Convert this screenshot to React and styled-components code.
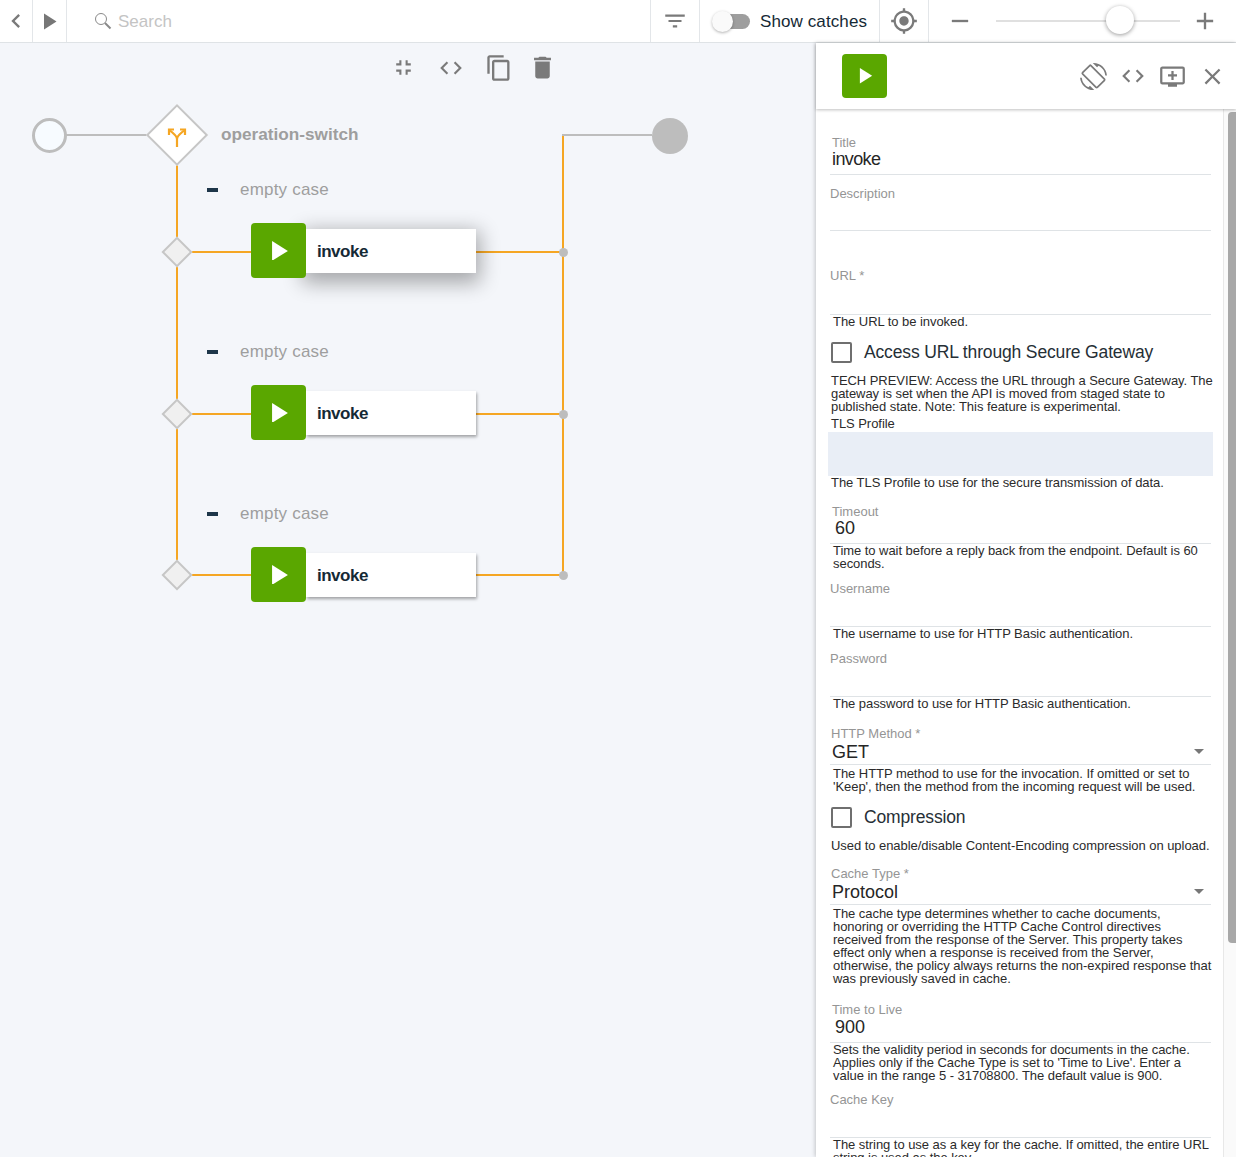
import React from 'react';
import styled, { createGlobalStyle } from 'styled-components';
import {
  MdChevronLeft, MdFilterList, MdMyLocation, MdFullscreenExit, MdCode, MdContentCopy,
  MdDelete, MdScreenRotation, MdAddToQueue, MdClose, MdAdd, MdRemove,
} from 'react-icons/md';

const orange = '#f5a623';
const grey = '#bdbdbd';
const iconColor = '#7a7a7a';
const green = '#5aa700';
const font = '"Liberation Sans", Arial, sans-serif';

const GlobalStyle = createGlobalStyle`
  html, body { margin: 0; padding: 0; height: 100%; overflow: hidden; }
  body { font-family: ${font}; background: #fff; }
  * { box-sizing: border-box; }
`;

const Page = styled.div`
  width: 1236px;
  height: 1157px;
  display: flex;
  flex-direction: column;
  overflow: hidden;
`;

const Toolbar = styled.header`
  height: 43px;
  flex: none;
  display: flex;
  align-items: stretch;
  background: #fff;
  border-bottom: 1px solid #dfe3e6;
`;

const ToolCell = styled.div`
  width: ${p => p.$w}px;
  flex: ${p => (p.$grow ? '1' : 'none')};
  display: flex;
  align-items: center;
  justify-content: ${p => (p.$start ? 'flex-start' : 'center')};
  padding-left: ${p => p.$pl || 0}px;
  border-right: ${p => (p.$noline ? 'none' : '1px solid #e3e6e9')};
  color: ${iconColor};
`;

const SearchText = styled.span`
  margin-left: 6px;
  padding-top: 1px;
  font-size: 17px;
  color: #c4c4c4;
`;

const Toggle = styled.div`
  position: relative;
  width: 33px;
  height: 15px;
  margin-left: 17px;
  border-radius: 8px;
  background: #9e9e9e;
`;

const ToggleKnob = styled.div`
  position: absolute;
  left: -5px;
  top: -3px;
  width: 21px;
  height: 21px;
  border-radius: 50%;
  background: #fafafa;
  box-shadow: 0 1px 3px rgba(0, 0, 0, 0.3);
`;

const ToggleLabel = styled.span`
  margin-left: 10px;
  padding-top: 1px;
  font-size: 17px;
  letter-spacing: 0.1px;
  color: #152935;
  white-space: nowrap;
`;

const SliderTrack = styled.div`
  position: relative;
  width: 184px;
  height: 2px;
  margin: 0 11px 0 22px;
  background: #e0e0e0;
`;

const SliderThumb = styled.div`
  position: absolute;
  left: 110px;
  top: -14px;
  width: 28px;
  height: 28px;
  border-radius: 50%;
  background: #fff;
  box-shadow: 0 1px 4px rgba(0, 0, 0, 0.4);
`;

const Body = styled.div`
  flex: 1;
  display: flex;
  min-height: 0;
`;

const Canvas = styled.main`
  position: relative;
  width: 816px;
  flex: none;
  background: #f4f6fa;
  overflow: hidden;
`;

const CanvasActions = styled.div`
  position: absolute;
  left: 390px;
  top: 10px;
  display: flex;
  align-items: center;
  gap: 20px;
  color: ${iconColor};
`;

const ActionSlot = styled.span`
  width: ${p => p.$w || 26}px;
  display: flex;
  justify-content: center;

  svg {
    flex: none;
  }
`;

/* the diagram is a free canvas: its nodes and wires sit at their own coordinates */
const Wire = styled.div`
  position: absolute;
  left: ${p => p.$x}px;
  top: ${p => p.$y}px;
  width: ${p => p.$w || 2}px;
  height: ${p => p.$h || 2}px;
  background: ${p => p.$color || orange};
`;

const Circle = styled.div`
  position: absolute;
  left: ${p => p.$x}px;
  top: ${p => p.$y}px;
  width: ${p => p.$size}px;
  height: ${p => p.$size}px;
  border-radius: 50%;
  background: ${p => p.$fill};
  border: ${p => (p.$ring ? `3px solid ${grey}` : 'none')};
`;

const Diamond = styled.div`
  position: absolute;
  left: ${p => p.$x}px;
  top: ${p => p.$y}px;
  width: ${p => p.$size}px;
  height: ${p => p.$size}px;
  transform: rotate(45deg);
  background: ${p => p.$fill};
  border: 2px solid #c6c6c6;
`;

const SplitIcon = styled.svg`
  position: absolute;
  left: 165px;
  top: 83px;
`;

const SwitchLabel = styled.div`
  position: absolute;
  left: 221px;
  top: 81px;
  font-size: 17.2px;
  font-weight: 700;
  line-height: 20px;
  color: #9e9e9e;
`;

const CaseDash = styled.div`
  position: absolute;
  left: 207px;
  top: ${p => p.$y + 3}px;
  width: 11px;
  height: 4px;
  background: #1d3649;
`;

const CaseLabel = styled.div`
  position: absolute;
  left: 240px;
  top: ${p => p.$y - 5}px;
  font-size: 17px;
  letter-spacing: 0.2px;
  line-height: 20px;
  color: #9e9e9e;
`;

const Node = styled.div`
  position: absolute;
  left: 251px;
  top: ${p => p.$y}px;
  width: 225px;
  height: 55px;
  display: flex;
  align-items: center;
`;

const NodeBody = styled.div`
  position: absolute;
  left: 55px;
  top: 6px;
  width: 170px;
  height: 44px;
  display: flex;
  align-items: center;
  padding: 1px 0 0 11px;
  background: #fff;
  font-size: 17px;
  font-weight: 700;
  letter-spacing: -0.5px;
  color: #152935;
  box-shadow: ${p => (p.$raised
    ? '0 6px 20px 4px rgba(0, 0, 0, 0.32)'
    : '1px 2px 3px rgba(0, 0, 0, 0.35)')};
`;

const GreenTile = styled.div`
  position: relative;
  z-index: 1;
  width: ${p => p.$w}px;
  height: ${p => p.$h}px;
  flex: none;
  display: flex;
  align-items: center;
  justify-content: center;
  padding-left: 2px;
  border-radius: 4px;
  background: ${green};
`;

const Panel = styled.aside`
  position: relative;
  flex: 1;
  display: flex;
  flex-direction: column;
  min-width: 0;
  background: #fff;
  box-shadow: -1px 0 4px rgba(0, 0, 0, 0.2);
`;

const PanelHead = styled.div`
  position: relative;
  z-index: 1;
  height: 66px;
  flex: none;
  display: flex;
  align-items: center;
  padding: 0 10px 0 26px;
  color: ${iconColor};
  box-shadow: 0 1px 3px rgba(0, 0, 0, 0.25);
`;

const HeadIcons = styled.div`
  margin-left: auto;
  display: flex;
  align-items: center;
  gap: 13px;
`;

const PanelScroll = styled.div`
  flex: 1;
  display: flex;
  min-height: 0;
  overflow: hidden;
`;

const Form = styled.div`
  width: 408px;
  flex: none;
  height: 1100px;
  padding-left: 14px;
  border-right: 1px solid #e8e8e8;
`;

const Scrollbar = styled.div`
  flex: 1;
  padding: 3px 0 0 4px;
  background: #fafafa;
`;

const ScrollThumb = styled.div`
  height: 831px;
  background: #a8a8a8;
  border-radius: 4px 0 0 4px;
`;

const Field = styled.div`
  position: relative;
  width: 381px;
  height: ${p => p.$h}px;
  border-bottom: 1px solid #dfe3e6;
`;

const Label = styled.div`
  padding: ${p => p.$top}px 0 0 ${p => p.$in || 0}px;
  font-size: 13px;
  line-height: 15px;
  color: #959595;
`;

const Value = styled.div`
  margin-top: ${p => p.$mt || 0}px;
  padding-left: ${p => p.$in}px;
  font-size: 18px;
  letter-spacing: ${p => p.$ls || 0}px;
  line-height: 20px;
  color: #262626;
`;

const Caret = styled.span`
  position: absolute;
  right: 7px;
  bottom: 10px;
  border-left: 5px solid transparent;
  border-right: 5px solid transparent;
  border-top: 5px solid #777;
`;

const Hint = styled.div`
  padding: ${p => p.$top || 0}px 0 ${p => p.$bottom || 0}px ${p => p.$in ?? 3}px;
  font-size: 13px;
  letter-spacing: -0.05px;
  line-height: 13px;
  white-space: nowrap;
  color: #2b2b2b;
`;

const CheckRow = styled.label`
  display: flex;
  align-items: center;
  gap: 12px;
  height: 21px;
  margin: ${p => p.$top}px 0 ${p => p.$bottom}px 1px;
  font-size: 17.5px;
  letter-spacing: -0.15px;
  color: #262f36;
`;

const CheckBox = styled.span`
  width: 21px;
  height: 21px;
  border: 2px solid #6f6f6f;
  border-radius: 2px;
`;

const TlsBox = styled.div`
  width: 385px;
  height: 44px;
  margin: 2px 0 0 -2px;
  background: #e9eef6;
`;

const Play = ({ size = 18 }) => (
  <svg width={size} height={size * 1.1} viewBox="0 0 18 20">
    <path d="M1 0 L17 10 L1 20 Z" fill="#fff" />
  </svg>
);

const SearchIcon = () => (
  <svg width="18" height="18" viewBox="0 0 18 18" fill="none" stroke="#8a8a8a">
    <circle cx="7" cy="7" r="5.5" strokeWidth="1" />
    <path d="M11 11 L16.5 16.5" strokeWidth="2" />
  </svg>
);

const Split = () => (
  <SplitIcon width="24" height="24" viewBox="0 0 24 24" fill="none" stroke={orange} strokeWidth="2.2">
    <path d="M12 21 V13 C12 10 9 8 5 4.5" />
    <path d="M12 13 C12 10 15 8 19 4.5" />
    <path d="M4 9 V3.5 H9" />
    <path d="M15 3.5 H20 V9" />
  </SplitIcon>
);

const branches = [
  { caseY: 142, nodeY: 180, mid: 209, raised: true },
  { caseY: 304, nodeY: 342, mid: 371 },
  { caseY: 466, nodeY: 504, mid: 532 },
];

const FlowDiagram = () => (
  <>
    <CanvasActions>
      <ActionSlot><MdFullscreenExit size={25} /></ActionSlot>
      <ActionSlot $w={30}><MdCode size={26} /></ActionSlot>
      <ActionSlot><MdContentCopy size={28} /></ActionSlot>
      <ActionSlot $w={20}><MdDelete size={29} /></ActionSlot>
    </CanvasActions>

    <Wire $x={66} $y={91} $w={82} $color={grey} />
    <Wire $x={176} $y={122} $h={410} />
    <Wire $x={562} $y={91} $h={441} />
    <Wire $x={562} $y={91} $w={90} $color={grey} />

    <Circle $x={32} $y={75} $size={35} $ring $fill="#f7fbff" />
    <Circle $x={652} $y={75} $size={36} $fill={grey} />

    <Diamond $x={155} $y={70} $size={44} $fill="#fff" />
    <Split />
    <SwitchLabel>operation-switch</SwitchLabel>

    {branches.map(b => (
      <React.Fragment key={b.nodeY}>
        <CaseDash $y={b.caseY} />
        <CaseLabel $y={b.caseY}>empty case</CaseLabel>
        <Wire $x={190} $y={b.mid - 1} $w={373} />
        <Diamond $x={166} $y={b.mid - 11} $size={22} $fill="#f0f0f0" />
        <Circle $x={559} $y={b.mid - 4} $size={9} $fill={grey} />
        <Node $y={b.nodeY}>
          <GreenTile $w={55} $h={55}><Play /></GreenTile>
          <NodeBody $raised={b.raised}>invoke</NodeBody>
        </Node>
      </React.Fragment>
    ))}
  </>
);

const PropertyForm = () => (
  <Form>
    <Field $h={66}>
      <Label $top={26} $in={2}>Title</Label>
      <Value $in={2} $mt={-1} $ls={-0.6}>invoke</Value>
    </Field>
    <Field $h={56}>
      <Label $top={11}>Description</Label>
    </Field>
    <Field $h={84}>
      <Label $top={37}>URL *</Label>
    </Field>
    <Hint>The URL to be invoked.</Hint>
    <CheckRow $top={14} $bottom={11}><CheckBox />Access URL through Secure Gateway</CheckRow>
    <Hint $in={1}>
      TECH PREVIEW: Access the URL through a Secure Gateway. The<br />
      gateway is set when the API is moved from staged state to<br />
      published state. Note: This feature is experimental.
    </Hint>
    <Hint $in={1} $top={4}>TLS Profile</Hint>
    <TlsBox />
    <Hint $in={1}>The TLS Profile to use for the secure transmission of data.</Hint>
    <Field $h={55}>
      <Label $top={15} $in={2}>Timeout</Label>
      <Value $in={5} $mt={-1}>60</Value>
    </Field>
    <Hint>
      Time to wait before a reply back from the endpoint. Default is 60<br />
      seconds.
    </Hint>
    <Field $h={57}>
      <Label $top={11}>Username</Label>
    </Field>
    <Hint>The username to use for HTTP Basic authentication.</Hint>
    <Field $h={57}>
      <Label $top={11}>Password</Label>
    </Field>
    <Hint>The password to use for HTTP Basic authentication.</Hint>
    <Field $h={55}>
      <Label $top={16} $in={1}>HTTP Method *</Label>
      <Value $in={2} $mt={1}>GET</Value>
      <Caret />
    </Field>
    <Hint $top={2}>
      The HTTP method to use for the invocation. If omitted or set to<br />
      'Keep', then the method from the incoming request will be used.
    </Hint>
    <CheckRow $top={14} $bottom={11}><CheckBox />Compression</CheckRow>
    <Hint $in={1}>Used to enable/disable Content-Encoding compression on upload.</Hint>
    <Field $h={53}>
      <Label $top={14} $in={1}>Cache Type *</Label>
      <Value $in={2} $mt={1}>Protocol</Value>
      <Caret />
    </Field>
    <Hint $top={2}>
      The cache type determines whether to cache documents,<br />
      honoring or overriding the HTTP Cache Control directives<br />
      received from the response of the Server. This property takes<br />
      effect only when a response is received from the Server,<br />
      otherwise, the policy always returns the non-expired response that<br />
      was previously saved in cache.
    </Hint>
    <Field $h={58}>
      <Label $top={17} $in={2}>Time to Live</Label>
      <Value $in={5}>900</Value>
    </Field>
    <Hint>
      Sets the validity period in seconds for documents in the cache.<br />
      Applies only if the Cache Type is set to 'Time to Live'. Enter a<br />
      value in the range 5 - 31708800. The default value is 900.
    </Hint>
    <Field $h={56}>
      <Label $top={10}>Cache Key</Label>
    </Field>
    <Hint>
      The string to use as a key for the cache. If omitted, the entire URL<br />
      string is used as the key.
    </Hint>
  </Form>
);

const App = () => (
  <Page>
    <GlobalStyle />
    <Toolbar>
      <ToolCell $w={33}><MdChevronLeft size={28} /></ToolCell>
      <ToolCell $w={34}>
        <svg width="14" height="17" viewBox="0 0 14 16" preserveAspectRatio="none"><path d="M1 0.5 L13.5 8 L1 15.5 Z" fill="#777" /></svg>
      </ToolCell>
      <ToolCell $grow $start $pl={27}>
        <SearchIcon />
        <SearchText>Search</SearchText>
      </ToolCell>
      <ToolCell $w={49}><MdFilterList size={26} /></ToolCell>
      <ToolCell $w={180} $start>
        <Toggle><ToggleKnob /></Toggle>
        <ToggleLabel>Show catches</ToggleLabel>
      </ToolCell>
      <ToolCell $w={49}><MdMyLocation size={28} /></ToolCell>
      <ToolCell $w={307} $noline $start $pl={17}>
        <MdRemove size={28} />
        <SliderTrack><SliderThumb /></SliderTrack>
        <MdAdd size={28} />
      </ToolCell>
    </Toolbar>
    <Body>
      <Canvas><FlowDiagram /></Canvas>
      <Panel>
        <PanelHead>
          <GreenTile $w={45} $h={44}><Play size={14} /></GreenTile>
          <HeadIcons>
            <MdScreenRotation size={27} />
            <MdCode size={26} />
            <MdAddToQueue size={27} />
            <MdClose size={27} />
          </HeadIcons>
        </PanelHead>
        <PanelScroll>
          <PropertyForm />
          <Scrollbar><ScrollThumb /></Scrollbar>
        </PanelScroll>
      </Panel>
    </Body>
  </Page>
);

export default App;
